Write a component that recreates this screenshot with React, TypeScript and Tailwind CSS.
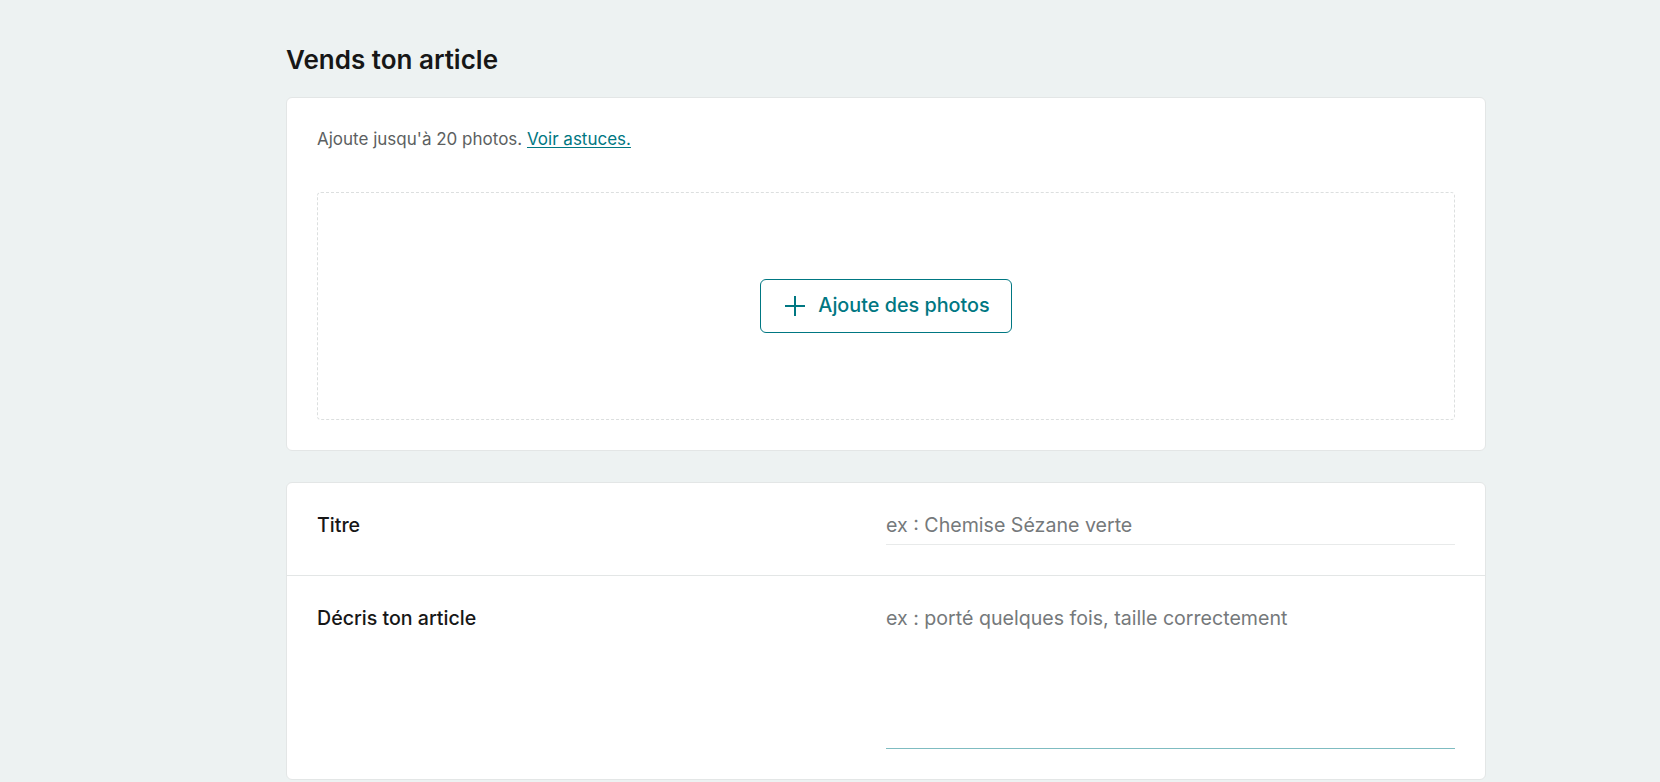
export default function App() {
  return (
    <div
      className="min-h-screen bg-[#edf2f2] pl-[286px] pt-[44px] text-[#171717]"
      style={{ fontFamily: "Inter, 'Noto Sans', sans-serif" }}
    >
      <div className="w-[1200px]">
        <h1 className="text-[26px] leading-[32px] font-semibold mb-[21px]">Vends ton article</h1>

        <div className="bg-white border border-[#e3e6e6] rounded-[6px] p-[30px]">
          <p className="text-[17px] leading-[22px] text-[#5c5f61]">
            Ajoute jusqu'à 20 photos.{" "}
            <a href="#" className="text-[#007782] underline underline-offset-2">
              Voir astuces.
            </a>
          </p>
          <div className="mt-[42px] h-[228px] border border-dashed border-[#dcdfdf] rounded-[4px] flex items-center justify-center">
            <button className="h-[54px] inline-flex items-center gap-[13px] pl-[24px] pr-[21px] border border-[#007782] rounded-[6px] text-[#007782] text-[19.8px] font-medium">
              <svg width="20" height="20" viewBox="0 0 20 20" fill="none" stroke="currentColor" strokeWidth="2">
                <path d="M10 0v20M0 10h20" />
              </svg>
              Ajoute des photos
            </button>
          </div>
        </div>

        <div className="mt-[31px] bg-white border border-[#e3e6e6] rounded-[6px]">
          <div className="grid grid-cols-2 p-[30px] border-b border-[#e3e6e6]">
            <label className="text-[19.6px] leading-[24px] font-medium">Titre</label>
            <div className="pb-[7px] border-b border-[#e8eaea] text-[19.6px] leading-[24px] text-[#75797b]">
              ex : Chemise Sézane verte
            </div>
          </div>
          <div className="grid grid-cols-2 p-[30px]">
            <label className="text-[19.6px] leading-[24px] font-medium">Décris ton article</label>
            <div className="h-[143px] border-b border-[#7fbcc1] text-[19.6px] leading-[24px] text-[#75797b]">
              ex : porté quelques fois, taille correctement
            </div>
          </div>
        </div>
      </div>
    </div>
  );
}
